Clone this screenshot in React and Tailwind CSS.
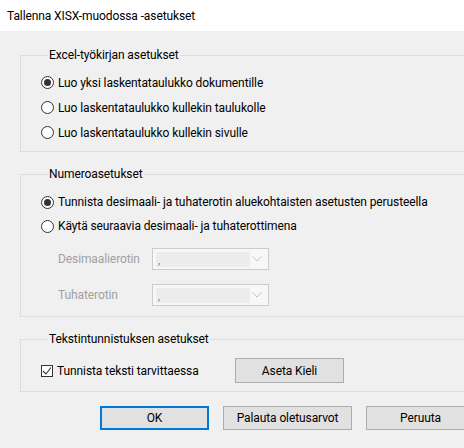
const font = { fontFamily: "Roboto, 'Liberation Sans', sans-serif" };

function Radio({ checked, label }) {
  return (
    <div className="flex h-[25px] items-center">
      <span className="flex h-[13px] w-[13px] items-center justify-center rounded-full border border-[#333333] bg-white">
        {checked && <span className="h-[7px] w-[7px] rounded-full bg-[#333333]" />}
      </span>
      <span className="ml-[4px] text-[12px] tracking-[-0.1px] text-black">{label}</span>
    </div>
  );
}

function Combo({ label, value }) {
  return (
    <div className="flex h-[22px] items-center">
      <span className="w-[94px] text-[12px] tracking-[-0.1px] text-[#a0a0a0]">{label}</span>
      <div className="flex h-[22px] w-[117px] items-center border border-[#cccccc] bg-[#f7f7f7] pl-[3px] pr-[6px]">
        <div className="flex h-[15px] w-[94px] items-end bg-[#ececec] pl-[2px] text-[11px] leading-[12px] text-[#808080]">
          {value}
        </div>
        <svg className="ml-auto" width="10" height="6" viewBox="0 0 10 6">
          <path d="M0.5 0.5 L5 5 L9.5 0.5" fill="none" stroke="#c2c2c2" strokeWidth="1" />
        </svg>
      </div>
    </div>
  );
}

function Group({ title, className, children }) {
  return (
    <fieldset className={"w-[460px] border border-[#dcdcdc] pl-[20px] " + className}>
      <legend className="ml-[7px] px-[1px] text-[12px] leading-[16px] tracking-[-0.1px] text-black">{title}</legend>
      {children}
    </fieldset>
  );
}

function Button({ children, primary, className }) {
  return (
    <button
      className={
        "bg-[#e1e1e1] text-[12px] tracking-[-0.1px] text-black " +
        (primary ? "border-2 border-[#0078d7] " : "border border-[#adadad] ") +
        className
      }
    >
      {children}
    </button>
  );
}

export default function App() {
  return (
    <div className="h-[448px] w-[464px] overflow-hidden bg-[#f0f0f0]" style={font}>
      <div className="w-[500px]">
        <div className="flex h-[31px] items-center bg-white pl-[7px] text-[12px] tracking-[-0.1px] text-black">
          Tallenna XISX-muodossa -asetukset
        </div>

        <div className="px-[20px] pt-[16px]">
          <Group title="Excel-työkirjan asetukset" className="pt-[7px] pb-[6px]">
            <Radio checked label="Luo yksi laskentataulukko dokumentille" />
            <Radio label="Luo laskentataulukko kullekin taulukolle" />
            <Radio label="Luo laskentataulukko kullekin sivulle" />
          </Group>

          <Group title="Numeroasetukset" className="mt-[14px] pt-[8px] pb-[10px]">
            <div className="flex flex-col">
              <div className="h-[24px] [&>div]:h-[24px]">
                <Radio checked label="Tunnista desimaali- ja tuhaterotin aluekohtaisten asetusten perusteella" />
              </div>
              <div className="h-[24px] [&>div]:h-[24px]">
                <Radio label="Käytä seuraavia desimaali- ja tuhaterottimena" />
              </div>
            </div>
            <div className="mt-[10px] flex flex-col gap-[14px] pl-[17px]">
              <Combo label="Desimaalierotin" value="," />
              <Combo label="Tuhaterotin" value="," />
            </div>
          </Group>

          <Group title="Tekstintunnistuksen asetukset" className="mt-[14px] pt-[11px] pb-[8px]">
            <div className="flex h-[25px] items-center">
              <span className="flex h-[12px] w-[12px] items-center justify-center border border-[#333333] bg-white">
                <svg width="10" height="10" viewBox="0 0 10 10">
                  <path d="M1 5 L4 8 L9 1.5" fill="none" stroke="#333333" strokeWidth="1.1" />
                </svg>
              </span>
              <span className="ml-[4px] w-[178px] text-[12px] tracking-[-0.1px] text-black">Tunnista teksti tarvittaessa</span>
              <Button className="h-[25px] w-[109px]">Aseta Kieli</Button>
            </div>
          </Group>
        </div>

        <div className="mt-[14px] flex gap-[14px] pl-[100px]">
          <Button primary className="h-[24px] w-[109px]">OK</Button>
          <Button className="h-[24px] w-[129px]">Palauta oletusarvot</Button>
          <Button className="h-[24px] w-[109px]">Peruuta</Button>
        </div>
      </div>
    </div>
  );
}
